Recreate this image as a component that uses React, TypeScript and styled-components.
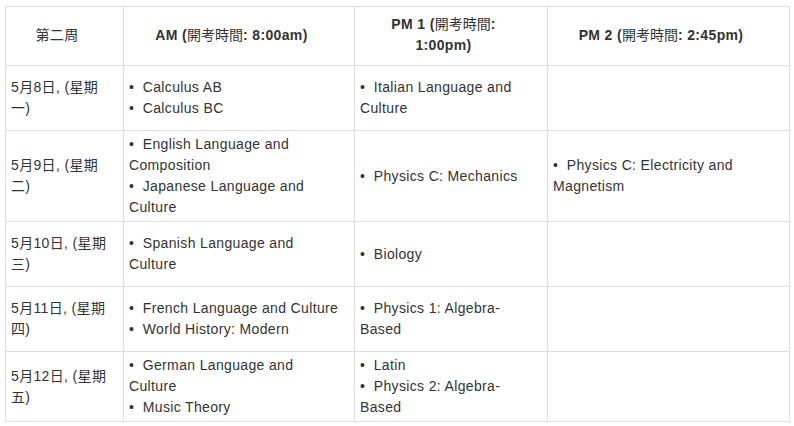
import React from "react";
import styled, { createGlobalStyle } from "styled-components";

const Global = createGlobalStyle`
  html, body { margin: 0; padding: 0; background: #fff; }
  body { font-family: "Liberation Sans", Arial, "Noto Sans CJK TC", sans-serif; }
`;

const Page = styled.div`
  padding: 6px 5px 0 5px;
`;

const Table = styled.table`
  border-collapse: collapse;
  table-layout: fixed;
  width: 784px;
  font-family: "Liberation Sans", Arial, "Noto Sans CJK TC", sans-serif;
  font-size: 14px;
  line-height: 21px;
  letter-spacing: 0.35px;
  color: #333;
`;

const Row = styled.tr<{ $h: number }>`
  height: ${(p) => p.$h}px;
`;

const HeadCell = styled.th`
  border: 1px solid #ddd;
  padding: 0 20px 2px 5px;
  font-weight: bold;
  text-align: center;
  vertical-align: middle;
  color: #333;
`;

const DayHead = styled(HeadCell)`
  font-weight: normal;
`;

const Cjk = styled.span`
  font-weight: normal;
  letter-spacing: 0;
`;

const Cell = styled.td`
  border: 1px solid #ddd;
  padding: 0 5px;
  text-align: left;
  vertical-align: middle;
`;

const Item = styled.div``;

type Exam = string[];
type RowData = { day: string[]; h: number; am: Exam[]; pm1: Exam[]; pm2: Exam[] };

const rows: RowData[] = [
  {
    day: ["5月8日, (星期", "一)"],
    h: 65,
    am: [["Calculus AB"], ["Calculus BC"]],
    pm1: [["Italian Language and", "Culture"]],
    pm2: [],
  },
  {
    day: ["5月9日, (星期", "二)"],
    h: 91,
    am: [
      ["English Language and", "Composition"],
      ["Japanese Language and", "Culture"],
    ],
    pm1: [["Physics C: Mechanics"]],
    pm2: [["Physics C: Electricity and", "Magnetism"]],
  },
  {
    day: ["5月10日, (星期", "三)"],
    h: 65,
    am: [["Spanish Language and", "Culture"]],
    pm1: [["Biology"]],
    pm2: [],
  },
  {
    day: ["5月11日, (星期", "四)"],
    h: 65,
    am: [["French Language and Culture"], ["World History: Modern"]],
    pm1: [["Physics 1: Algebra-", "Based"]],
    pm2: [],
  },
  {
    day: ["5月12日, (星期", "五)"],
    h: 70,
    am: [["German Language and", "Culture"], ["Music Theory"]],
    pm1: [["Latin"], ["Physics 2: Algebra-", "Based"]],
    pm2: [],
  },
];

function Lines({ lines }: { lines: string[] }) {
  return (
    <>
      {lines.map((l, i) => (
        <React.Fragment key={i}>
          {i > 0 && <br />}
          {l}
        </React.Fragment>
      ))}
    </>
  );
}

function Exams({ items }: { items: Exam[] }) {
  return (
    <>
      {items.map((it, i) => (
        <Item key={i}>
          {"•\u00a0\u00a0"}
          <Lines lines={it} />
        </Item>
      ))}
    </>
  );
}

export default function App() {
  return (
    <>
      <Global />
      <Page>
        <Table>
          <colgroup>
            <col style={{ width: 118 }} />
            <col style={{ width: 231 }} />
            <col style={{ width: 193 }} />
            <col style={{ width: 242 }} />
          </colgroup>
          <thead>
            <Row $h={59}>
              <DayHead>第二周</DayHead>
              <HeadCell>
                AM (<Cjk>開考時間</Cjk>: 8:00am)
              </HeadCell>
              <HeadCell>
                PM 1 (<Cjk>開考時間</Cjk>:
                <br />
                1:00pm)
              </HeadCell>
              <HeadCell>
                PM 2 (<Cjk>開考時間</Cjk>: 2:45pm)
              </HeadCell>
            </Row>
          </thead>
          <tbody>
            {rows.map((r, i) => (
              <Row key={i} $h={r.h}>
                <Cell>
                  <Lines lines={r.day} />
                </Cell>
                <Cell>
                  <Exams items={r.am} />
                </Cell>
                <Cell>
                  <Exams items={r.pm1} />
                </Cell>
                <Cell>
                  <Exams items={r.pm2} />
                </Cell>
              </Row>
            ))}
          </tbody>
        </Table>
      </Page>
    </>
  );
}
